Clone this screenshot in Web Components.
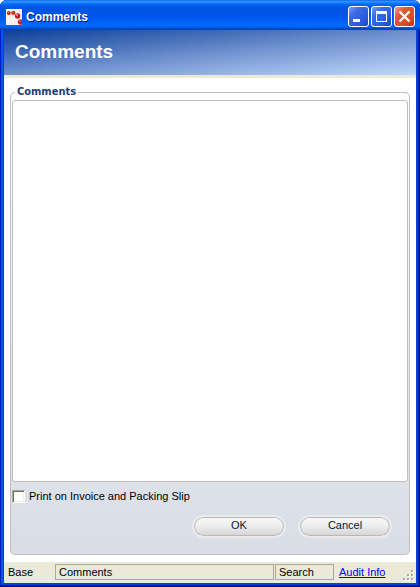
<!DOCTYPE html>
<html lang="en">
<head>
  <meta charset="UTF-8">
  <meta name="viewport" content="width=device-width, initial-scale=1.0">
  <title>Comments</title>
  <style>
    body {
      margin: 0;
      background: #fff;
      color: #000;
      font: 11px/13px "Liberation Sans", sans-serif;
    }
  </style>
</head>
<body>
  <dialog-window>
    <title-bar slot="title">Comments</title-bar>
    <page-banner>Comments</page-banner>
    <comments-form></comments-form>
    <status-bar>
      <status-panel plain>Base</status-panel>
      <status-panel wide>Comments</status-panel>
      <status-panel>Search</status-panel>
      <status-link>Audit Info</status-link>
    </status-bar>
  </dialog-window>

  <script>
    // Base class: puts the markup of the subclass into an open shadow root
    class BaseElement extends HTMLElement {
      constructor() {
        super();
        this.attachShadow({ mode: 'open' });
        this.shadowRoot.innerHTML = this.template();
      }

      template() {
        return '<slot></slot>';
      }
    }

    class DialogWindow extends BaseElement {
      template() {
        return `
          <style>
            :host {
              display: flex;
              flex-direction: column;
              box-sizing: border-box;
              min-height: 100vh;
              overflow: hidden;
              border-radius: 7px 7px 0 0;
              padding: 0 4px 4px;
              background: #0841e0;
              box-shadow: inset -1px -1px #00138c, inset -2px -2px #001ea0, inset 1px 0 #0019cf, inset -3px -3px #0441d8, inset 3px 0 #0855dd;
            }

            .title {
              margin: 0 -4px;
            }

            .client {
              display: flex;
              flex: 1;
              flex-direction: column;
              background: #fff;
            }
          </style>
          <div class="title"><slot name="title"></slot></div>
          <div class="client"><slot></slot></div>
        `;
      }
    }

    class TitleBar extends BaseElement {
      template() {
        return `
          <style>
            :host {
              display: flex;
              align-items: center;
              box-sizing: border-box;
              height: 30px;
              padding: 3px 5px 0 6px;
              background: linear-gradient(#0058ee 0, #3593ff 1px, #288eff 2px, #127dff 3px, #036ffc 4px, #0262ee 5px, #0057e5 7px, #0054e3 11px, #0055eb 15px, #005bf5 20px, #026afe 25px, #0062ef 27px, #0052d6 28px, #0040ab 30px);
              color: #fff;
            }

            .logo {
              width: 16px;
              height: 16px;
            }

            h1 {
              flex: 1;
              margin: 0 0 0 4px;
              font: bold 12px/16px "Liberation Sans", sans-serif;
              text-shadow: 1px 1px #0a1883;
            }

            .controls {
              display: flex;
              gap: 2px;
            }

            button {
              width: 21px;
              height: 21px;
              padding: 0;
              border: 1px solid #fff;
              border-radius: 3px;
              background: linear-gradient(135deg, #7c9cf0 0%, #3c6be4 30%, #2a5be0 70%, #1746c4 100%);
            }

            .close {
              background: linear-gradient(135deg, #f0a088 0%, #e25a36 30%, #dc4c28 70%, #b83410 100%);
            }

            button svg {
              display: block;
            }
          </style>
          <svg class="logo" viewBox="0 0 16 16" aria-hidden="true">
            <rect width="16" height="16" fill="#f4f1ef"/>
            <g fill="#c9201c">
              <circle cx="2.8" cy="4" r="2"/>
              <circle cx="7.3" cy="3.8" r="2.1"/>
              <circle cx="11.6" cy="7" r="2.7"/>
              <circle cx="14.6" cy="13" r="2.8"/>
            </g>
            <g fill="#f0a09a">
              <circle cx="2.3" cy="3.3" r=".6"/>
              <circle cx="6.8" cy="3.1" r=".6"/>
              <circle cx="11" cy="6" r=".9"/>
              <circle cx="14" cy="12" r=".7"/>
            </g>
          </svg>
          <h1><slot></slot></h1>
          <div class="controls">
            <button type="button" aria-label="Minimize">
              <svg width="19" height="19"><path fill="#fff" d="M4 12h7v3H4z"/></svg>
            </button>
            <button type="button" aria-label="Maximize">
              <svg width="19" height="19"><path fill="#fff" fill-rule="evenodd" d="M4 4h11v11H4zM5 7v7h9V7z"/></svg>
            </button>
            <button type="button" class="close" aria-label="Close">
              <svg width="19" height="19"><path stroke="#fff" stroke-width="2.3" d="M4.5 4.5l10 10M14.5 4.5l-10 10"/></svg>
            </button>
          </div>
        `;
      }
    }

    class PageBanner extends BaseElement {
      template() {
        return `
          <style>
            :host {
              display: block;
              padding: 11px 11px 12px;
              border-bottom: 3px solid #ece9d8;
              background: linear-gradient(174deg, #0d409a 0%, #6f91cf 52%, #c0d8fa 100%);
              color: #fff;
            }

            h2 {
              margin: 0;
              font: bold 19px/22px "Liberation Sans", sans-serif;
            }
          </style>
          <h2><slot></slot></h2>
        `;
      }
    }

    class PillButton extends BaseElement {
      template() {
        return `
          <style>
            :host {
              display: block;
              width: 94px;
            }

            button {
              display: block;
              width: 100%;
              height: 23px;
              padding: 0 0 2px;
              border: 2px solid #ebebed;
              border-radius: 12px;
              background: linear-gradient(#fafafa, #ececec 50%, #d3d3d3);
              background-clip: padding-box;
              box-shadow: inset 0 0 0 1px #b9b9bb;
              color: #001a3c;
              font: inherit;
            }
          </style>
          <button type="button"><slot></slot></button>
        `;
      }
    }

    class CommentsForm extends BaseElement {
      template() {
        return `
          <style>
            :host {
              display: flex;
              flex: 1;
              padding: 7px 6px;
            }

            fieldset {
              display: flex;
              flex: 1;
              flex-direction: column;
              min-width: 0;
              margin: 0;
              padding: 1px 1px 16px;
              border: 1px solid #bfbfbf;
              border-radius: 5px;
              background: linear-gradient(#fff 0%, #dfe3ea 80%, #d8dde6 100%);
            }

            legend {
              margin-left: 3px;
              padding: 0 2px;
              color: #1f3d77;
              font: bold 11px/14px "DejaVu Sans Condensed", sans-serif;
            }

            textarea {
              flex: 1;
              box-sizing: border-box;
              width: 100%;
              margin: 0;
              padding: 3px;
              border: 1px solid #bfbfbf;
              border-radius: 3px;
              outline: none;
              background: #fff;
              font: inherit;
              resize: none;
            }

            .option {
              display: flex;
              align-items: center;
              gap: 4px;
              margin-top: 8px;
            }

            input {
              appearance: none;
              box-sizing: border-box;
              width: 13px;
              height: 13px;
              margin: 0;
              border: 1px solid;
              border-color: #aca899 #fff #fff #aca899;
              background: #fff;
              box-shadow: inset 1px 1px #716f64, inset -1px -1px #f1efe2;
            }

            .actions {
              display: flex;
              justify-content: flex-end;
              gap: 12px;
              margin: 12px 16px 0 0;
            }
          </style>
          <fieldset>
            <legend>Comments</legend>
            <textarea aria-label="Comments"></textarea>
            <div class="option">
              <input type="checkbox" id="print">
              <label for="print">Print on Invoice and Packing Slip</label>
            </div>
            <div class="actions">
              <pill-button>OK</pill-button>
              <pill-button>Cancel</pill-button>
            </div>
          </fieldset>
        `;
      }
    }

    class StatusBar extends BaseElement {
      template() {
        return `
          <style>
            :host {
              display: flex;
              align-items: flex-end;
              gap: 1px;
              padding-top: 2px;
              background: #ece9d8;
            }

            .panels {
              display: flex;
              flex: 1;
              gap: 1px;
              margin-bottom: 3px;
            }
          </style>
          <div class="panels"><slot></slot></div>
          <svg width="13" height="13" aria-hidden="true">
            <path fill="#fff" d="M9 1h2v2H9zM5 5h2v2H5zM9 5h2v2H9zM1 9h2v2H1zM5 9h2v2H5zM9 9h2v2H9z"/>
            <path fill="#b0ac9c" d="M8 0h2v2H8zM4 4h2v2H4zM8 4h2v2H8zM0 8h2v2H0zM4 8h2v2H4zM8 8h2v2H8z"/>
          </svg>
        `;
      }
    }

    class StatusPanel extends BaseElement {
      template() {
        return `
          <style>
            :host {
              display: block;
              box-sizing: border-box;
              width: 59px;
              padding: 1px 3px 0;
              border: 1px solid #aca899;
            }

            :host([plain]) {
              width: 50px;
              border-color: transparent;
            }

            :host([wide]) {
              flex: 1;
            }
          </style>
          <slot></slot>
        `;
      }
    }

    class StatusLink extends BaseElement {
      template() {
        return `
          <style>
            :host {
              display: block;
              box-sizing: border-box;
              width: 67px;
              padding: 2px 4px 0;
              white-space: nowrap;
            }

            a {
              color: #00f;
            }
          </style>
          <a href="#"><slot></slot></a>
        `;
      }
    }

    // Register the custom elements
    customElements.define('dialog-window', DialogWindow);
    customElements.define('title-bar', TitleBar);
    customElements.define('page-banner', PageBanner);
    customElements.define('pill-button', PillButton);
    customElements.define('comments-form', CommentsForm);
    customElements.define('status-bar', StatusBar);
    customElements.define('status-panel', StatusPanel);
    customElements.define('status-link', StatusLink);
  </script>
</body>
</html>
